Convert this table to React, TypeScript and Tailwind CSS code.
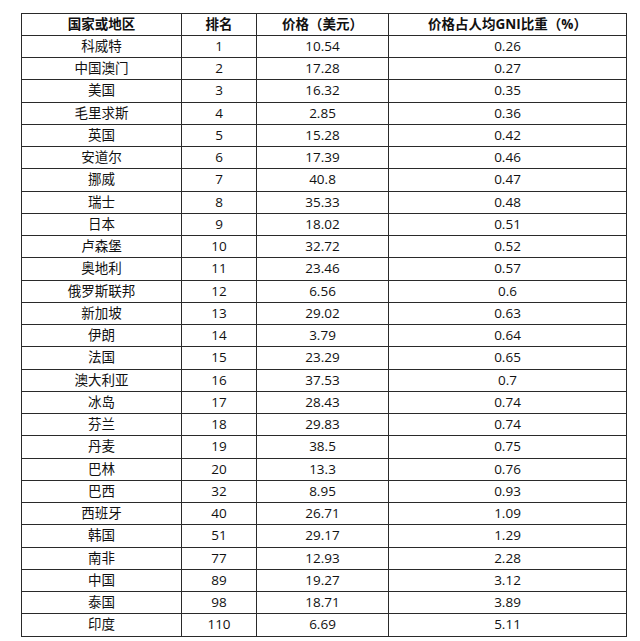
import React from "react";

const rows: [string, string, string, string][] = [
  ["科威特", "1", "10.54", "0.26"],
  ["中国澳门", "2", "17.28", "0.27"],
  ["美国", "3", "16.32", "0.35"],
  ["毛里求斯", "4", "2.85", "0.36"],
  ["英国", "5", "15.28", "0.42"],
  ["安道尔", "6", "17.39", "0.46"],
  ["挪威", "7", "40.8", "0.47"],
  ["瑞士", "8", "35.33", "0.48"],
  ["日本", "9", "18.02", "0.51"],
  ["卢森堡", "10", "32.72", "0.52"],
  ["奥地利", "11", "23.46", "0.57"],
  ["俄罗斯联邦", "12", "6.56", "0.6"],
  ["新加坡", "13", "29.02", "0.63"],
  ["伊朗", "14", "3.79", "0.64"],
  ["法国", "15", "23.29", "0.65"],
  ["澳大利亚", "16", "37.53", "0.7"],
  ["冰岛", "17", "28.43", "0.74"],
  ["芬兰", "18", "29.83", "0.74"],
  ["丹麦", "19", "38.5", "0.75"],
  ["巴林", "20", "13.3", "0.76"],
  ["巴西", "32", "8.95", "0.93"],
  ["西班牙", "40", "26.71", "1.09"],
  ["韩国", "51", "29.17", "1.29"],
  ["南非", "77", "12.93", "2.28"],
  ["中国", "89", "19.27", "3.12"],
  ["泰国", "98", "18.71", "3.89"],
  ["印度", "110", "6.69", "5.11"],
];

const header: [string, string, string, string] = ["国家或地区", "排名", "价格（美元）", "价格占人均GNI比重（%）"];

function rowH(i: number) {
  return Math.floor((i + 1) * 22.25) - Math.floor(i * 22.25) === 23 ? "h-[23px]" : "h-[22px]";
}

function Row({ cells, i, bold }: { cells: [string, string, string, string]; i: number; bold?: boolean }) {
  const cls = `flex items-center justify-center border-r border-b border-[#2a2a2a] ${bold ? "font-bold" : ""}`;
  return (
    <div className={`grid grid-cols-[160px_75px_132px_238px] ${rowH(i)}`}>
      {cells.map((c, k) => (
        <div key={k} className={cls}>
          {c}
        </div>
      ))}
    </div>
  );
}

export default function App() {
  return (
    <div
      className="w-[640px] h-[641px] bg-white pt-[13px] pl-[21px] text-[13.5px] text-[#111111] leading-none"
      style={{ fontFamily: '"Open Sans", "Noto Sans CJK SC", sans-serif' }}
    >
      <div className="w-[606px] border-l border-t border-[#2a2a2a]">
        <Row cells={header} i={0} bold />
        {rows.map((r, i) => (
          <Row key={i} cells={r} i={i + 1} />
        ))}
      </div>
    </div>
  );
}
